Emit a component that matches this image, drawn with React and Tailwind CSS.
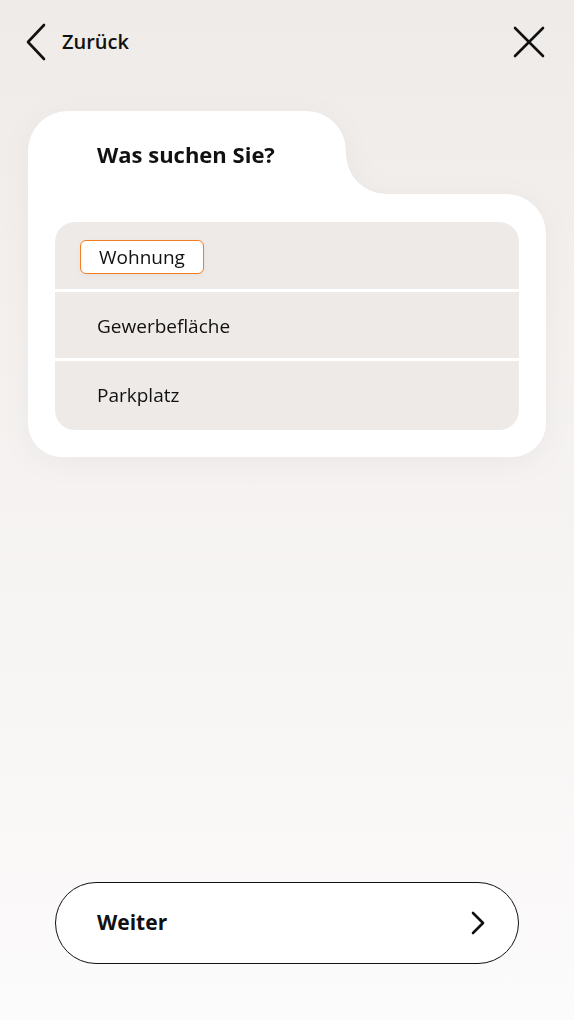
import React, { useState } from 'react';

const options = [
  { label: 'Wohnung', h: 'h-[67px]' },
  { label: 'Gewerbefläche', h: 'h-[66px] pt-[2px]' },
  { label: 'Parkplatz', h: 'h-[69px]' },
];

function ChevronLeft() {
  return (
    <svg width="22" height="38" viewBox="0 0 22 38" fill="none">
      <path d="M19 2 3 19l16 17" stroke="#111" strokeWidth="2.6" strokeLinecap="round" strokeLinejoin="round" />
    </svg>
  );
}

function CloseIcon() {
  return (
    <svg width="34" height="34" viewBox="0 0 34 34" fill="none">
      <path d="M3 3l28 28M31 3 3 31" stroke="#111" strokeWidth="2.6" strokeLinecap="round" />
    </svg>
  );
}

function ChevronRight() {
  return (
    <svg width="14" height="24" viewBox="0 0 14 24" fill="none">
      <path d="M2 2l10 10-10 10" stroke="#111" strokeWidth="2.6" strokeLinecap="round" strokeLinejoin="round" />
    </svg>
  );
}

export default function App() {
  const [selected, setSelected] = useState('Wohnung');

  return (
    <div className="h-[1020px] w-full flex flex-col bg-gradient-to-b from-[#efebe8] to-[#fcfbfb] font-['Open_Sans',sans-serif] text-[#111]">
      <header className="h-[84px] flex items-center justify-between pl-[25px] pr-[28px]">
        <button className="flex items-center gap-[15px]">
          <ChevronLeft />
          <span className="text-[20px] font-semibold">Zurück</span>
        </button>
        <button>
          <CloseIcon />
        </button>
      </header>

      <div className="mx-[28px] mt-[27px] drop-shadow-[0_6px_14px_rgba(0,0,0,0.04)]">
        <div className="flex">
          <div className="w-[318px] h-[83px] bg-white rounded-t-[40px] pl-[69px] pt-[28px]">
            <h1 className="text-[22px] font-bold leading-[30px]">Was suchen Sie?</h1>
          </div>
          <div className="flex-1 flex items-end">
            <div className="w-[40px] h-[40px] bg-[radial-gradient(circle_at_100%_0%,transparent_39.5px,white_40px)]" />
          </div>
        </div>
        <div className="bg-white rounded-b-[34px] rounded-tr-[40px] px-[27px] pt-[28px] pb-[27px]">
          <ul className="bg-white rounded-[20px] overflow-hidden flex flex-col gap-[3px]">
            {options.map((o) => (
              <li
                key={o.label}
                onClick={() => setSelected(o.label)}
                className={`bg-[#eeeae7] flex items-center cursor-pointer ${o.h} ${o.label === selected ? 'pl-[25px]' : 'pl-[42px]'}`}
              >
                {o.label === selected ? (
                  <span className="mt-[3px] h-[34px] flex items-center px-[18px] bg-white border-[1.5px] border-[#f57c1f] rounded-[6px] text-[19px] shadow-[0_2px_6px_rgba(0,0,0,0.04)]">
                    {o.label}
                  </span>
                ) : (
                  <span className="text-[19px]">{o.label}</span>
                )}
              </li>
            ))}
          </ul>
        </div>
      </div>

      <div className="mt-auto mb-[56px] mx-[55px]">
        <button className="w-full h-[82px] rounded-full bg-white border-[1.5px] border-[#111] flex items-center justify-between pl-[41px] pr-[33px]">
          <span className="text-[21px] font-bold">Weiter</span>
          <ChevronRight />
        </button>
      </div>
    </div>
  );
}
